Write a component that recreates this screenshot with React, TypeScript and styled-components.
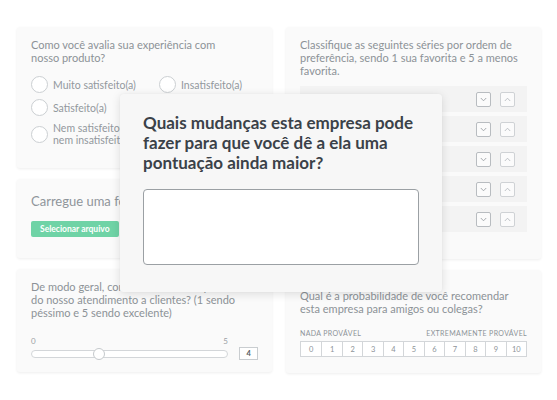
import React from 'react';
import styled, { createGlobalStyle } from 'styled-components';

const GlobalStyle = createGlobalStyle`
  html, body {
    margin: 0;
    padding: 0;
    background: #fff;
  }
  body {
    font-family: Lato, "Open Sans", sans-serif;
    color: #6b7278;
  }
`;

const Page = styled.div`
  position: relative;
  width: 557px;
  height: 400px;
  overflow: hidden;
  background: #fff;
`;

const Grid = styled.div`
  display: grid;
  grid-template-columns: 255px 255px;
  column-gap: 14px;
  padding: 27px 0 0 17px;
`;

const Column = styled.div`
  display: flex;
  flex-direction: column;
  gap: 11px;
`;

const Card = styled.div<{ $h: number; $top?: number }>`
  box-sizing: border-box;
  height: ${({ $h }) => $h}px;
  background: #fafafa;
  border-radius: 3px;
  box-shadow: 0 1px 3px rgba(0, 0, 0, 0.07);
  padding: ${({ $top }) => $top ?? 11}px 14px 11px 14px;
`;

const Question = styled.div`
  font-size: 11px;
  line-height: 13px;
  color: #8c9297;
`;

const RadioGrid = styled.div`
  display: grid;
  grid-template-columns: 128px 1fr;
  row-gap: 6px;
  margin-top: 12px;
`;

const RadioItem = styled.div`
  display: flex;
  align-items: center;
  gap: 5px;
  font-size: 10.5px;
  line-height: 12px;
  color: #92989d;
`;

const Circle = styled.span`
  flex: none;
  width: 15px;
  height: 15px;
  border-radius: 50%;
  border: 1px solid #cbcfd2;
  background: #fff;
`;

const UploadTitle = styled.div`
  font-size: 13px;
  color: #8f959a;
  margin-top: 3px;
`;

const GreenButton = styled.div`
  display: inline-block;
  margin-top: 12px;
  background: #6fd3a6;
  color: #fff;
  font-size: 8.5px;
  line-height: 10px;
  font-weight: 700;
  padding: 3px 9px;
  border-radius: 2px;
`;

const SliderLabels = styled.div`
  display: flex;
  justify-content: space-between;
  width: 197px;
  font-size: 8px;
  color: #9aa0a5;
  margin-top: 17px;
`;

const SliderRow = styled.div`
  display: flex;
  align-items: center;
  gap: 11px;
  margin-top: 1px;
`;

const Track = styled.div`
  position: relative;
  width: 197px;
  height: 6px;
  border: 1px solid #d3d6d9;
  border-radius: 4px;
  background: #fff;
`;

const Thumb = styled.div`
  position: absolute;
  top: -3px;
  width: 10px;
  height: 10px;
  border-radius: 50%;
  border: 1px solid #c5c9cc;
  background: #fff;
`;

const ValueBox = styled.div`
  width: 17px;
  height: 11px;
  border: 1px solid #c9cdd0;
  background: #fff;
  font-size: 7.5px;
  font-weight: 700;
  color: #555b60;
  display: flex;
  align-items: center;
  justify-content: center;
`;

const RankList = styled.div`
  display: flex;
  flex-direction: column;
  gap: 4px;
  margin-top: 9px;
`;

const RankRow = styled.div`
  height: 26px;
  background: #f3f3f3;
  display: flex;
  align-items: center;
  justify-content: flex-end;
  gap: 9px;
  padding-right: 12px;
`;

const ArrowBox = styled.div<{ $light?: boolean }>`
  width: 15px;
  height: 15px;
  box-sizing: border-box;
  border: 1px solid ${({ $light }) => ($light ? '#cfd2d5' : '#b8bcc0')};
  border-radius: 2px;
  background: #fbfbfb;
  display: flex;
  align-items: center;
  justify-content: center;
`;

const ScaleLabels = styled.div`
  display: flex;
  justify-content: space-between;
  font-size: 7px;
  letter-spacing: 0.35px;
  color: #8d9398;
  margin-top: 14px;
`;

const Scale = styled.div`
  display: grid;
  grid-template-columns: repeat(11, 1fr);
  margin-top: 4px;
  border: 1px solid #d3d6d9;
  background: #fff;
  height: 14px;
`;

const ScaleCell = styled.div`
  display: flex;
  align-items: center;
  justify-content: center;
  font-size: 7.5px;
  color: #8d9398;
  & + & {
    border-left: 1px solid #d3d6d9;
  }
`;

const Modal = styled.div`
  position: absolute;
  left: 120px;
  top: 94px;
  width: 322px;
  height: 198px;
  box-sizing: border-box;
  background: #f7f7f7;
  border-radius: 3px;
  box-shadow: 0 2px 10px rgba(0, 0, 0, 0.12), 0 0 1px rgba(0, 0, 0, 0.08);
  padding: 19px 23px 0 23px;
`;

const ModalTitle = styled.div`
  font-size: 17px;
  line-height: 20px;
  font-weight: 700;
  white-space: nowrap;
  color: #3b4249;
`;

const TextBox = styled.div`
  margin-top: 16px;
  width: 276px;
  height: 76px;
  box-sizing: border-box;
  border: 1px solid #9ba0a4;
  border-radius: 4px;
  background: #fff;
`;

const Chevron = ({ up }: { up?: boolean }) => (
  <svg width="7" height="5" viewBox="0 0 7 5">
    <path
      d={up ? 'M0.8 4 L3.5 1.2 L6.2 4' : 'M0.8 1 L3.5 3.8 L6.2 1'}
      fill="none"
      stroke={up ? '#b7bbbf' : '#9ea3a7'}
      strokeWidth="0.9"
    />
  </svg>
);

export default function App() {
  return (
    <Page>
      <GlobalStyle />
      <Grid>
        <Column>
          <Card $h={141}>
            <Question>Como você avalia sua experiência com<br />nosso produto?</Question>
            <RadioGrid>
              <RadioItem><Circle />Muito satisfeito(a)</RadioItem>
              <RadioItem><Circle />Insatisfeito(a)</RadioItem>
              <RadioItem><Circle />Satisfeito(a)</RadioItem>
              <span />
              <RadioItem><Circle />Nem satisfeito(a)<br />nem insatisfeito(a)</RadioItem>
            </RadioGrid>
          </Card>
          <Card $h={79}>
            <UploadTitle>Carregue uma foto do produto</UploadTitle>
            <GreenButton>Selecionar arquivo</GreenButton>
          </Card>
          <Card $h={103}>
            <Question>
              De modo geral, como você avalia a qualidade<br />
              do nosso atendimento a clientes? (1 sendo<br />
              péssimo e 5 sendo excelente)
            </Question>
            <SliderLabels><span>0</span><span>5</span></SliderLabels>
            <SliderRow>
              <Track>
                <Thumb style={{ left: `${(62 / 197) * 100}%` }} />
              </Track>
              <ValueBox>4</ValueBox>
            </SliderRow>
          </Card>
        </Column>
        <Column>
          <Card $h={232}>
            <Question>
              Classifique as seguintes séries por ordem de<br />
              preferência, sendo 1 sua favorita e 5 a menos<br />
              favorita.
            </Question>
            <RankList>
              {[0, 1, 2, 3, 4].map((i) => (
                <RankRow key={i}>
                  <ArrowBox><Chevron /></ArrowBox>
                  <ArrowBox $light><Chevron up /></ArrowBox>
                </RankRow>
              ))}
            </RankList>
          </Card>
          <Card $h={103} $top={19}>
            <Question>
              Qual é a probabilidade de você recomendar<br />
              esta empresa para amigos ou colegas?
            </Question>
            <ScaleLabels><span>NADA PROVÁVEL</span><span>EXTREMAMENTE PROVÁVEL</span></ScaleLabels>
            <Scale>
              {Array.from({ length: 11 }, (_, i) => (
                <ScaleCell key={i}>{i}</ScaleCell>
              ))}
            </Scale>
          </Card>
        </Column>
      </Grid>
      <Modal>
        <ModalTitle>
          Quais mudanças esta empresa pode<br />
          fazer para que você dê a ela uma<br />
          pontuação ainda maior?
        </ModalTitle>
        <TextBox />
      </Modal>
    </Page>
  );
}
